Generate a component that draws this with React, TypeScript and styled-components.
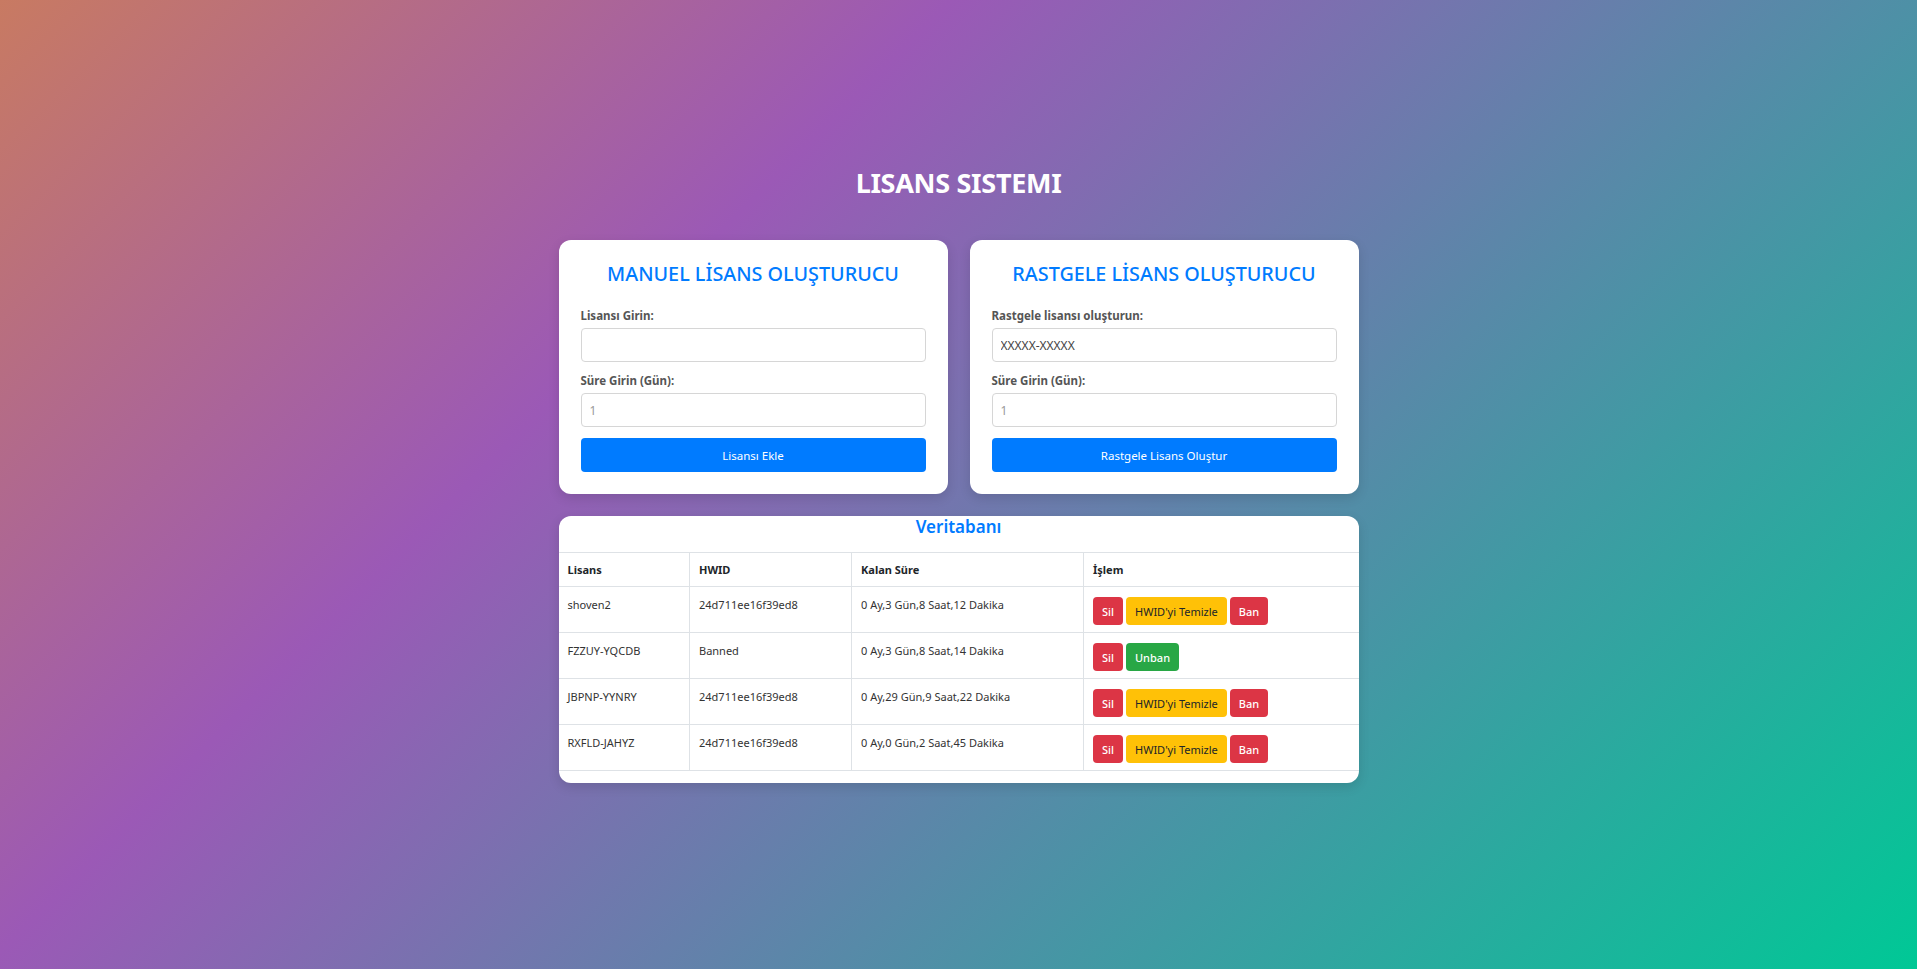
import React from "react";
import styled, { createGlobalStyle } from "styled-components";

const GlobalStyle = createGlobalStyle`
  * { box-sizing: border-box; }
  html, body { margin: 0; padding: 0; }
  body {
    font-family: "Noto Sans", "Open Sans", Arial, sans-serif;
    color: #212529;
  }
`;

const Page = styled.div`
  min-height: 100vh;
  background: linear-gradient(135deg, #c87a62 0%, #9b59b6 33%, #00c896 100%);
  display: flex;
  flex-direction: column;
  align-items: center;
  padding-top: 166px;
`;

const Title = styled.h1`
  margin: 0 0 40px;
  font-size: 27px;
  line-height: 34px;
  font-weight: 700;
  color: #ffffff;
  letter-spacing: -0.3px;
`;

const Container = styled.div`
  width: 800px;
  display: flex;
  flex-direction: column;
  gap: 22px;
`;

const CardRow = styled.div`
  display: grid;
  grid-template-columns: 1fr 1fr;
  gap: 22px;
`;

const Card = styled.div`
  background: #ffffff;
  border-radius: 12px;
  padding: 21px 22px 22px;
  box-shadow: 0 4px 12px rgba(0, 0, 0, 0.12);
`;

const CardTitle = styled.h2`
  margin: 0 0 21px;
  font-size: 19.8px;
  line-height: 26px;
  font-weight: 500;
  color: #007bff;
  text-align: center;
`;

const Label = styled.label`
  display: block;
  margin-bottom: 4px;
  font-size: 11.5px;
  line-height: 16px;
  font-weight: 700;
  color: #555555;
`;

const Input = styled.input`
  display: block;
  width: 100%;
  height: 34px;
  margin-bottom: 11px;
  padding: 0 8px;
  border: 1px solid #d6d6d6;
  border-radius: 4px;
  font-family: inherit;
  font-size: 12px;
  color: #444444;
  background: #ffffff;
  &::placeholder { color: #9a9a9a; }
`;

const SubmitButton = styled.button`
  display: block;
  width: 100%;
  height: 34px;
  border: none;
  border-radius: 4px;
  background: #007bff;
  color: #ffffff;
  font-family: inherit;
  font-size: 11.5px;
  cursor: pointer;
`;

const TableCard = styled.div`
  background: #ffffff;
  border-radius: 12px;
  padding: 0 0 12px;
  overflow: hidden;
  box-shadow: 0 4px 12px rgba(0, 0, 0, 0.12);
`;

const TableTitle = styled.h3`
  margin: 0 0 14px;
  font-size: 17px;
  line-height: 22px;
  font-weight: 600;
  color: #007bff;
  text-align: center;
`;

const Table = styled.table`
  width: 100%;
  border-collapse: collapse;
  table-layout: fixed;
  font-size: 11px;
`;

const Th = styled.th<{ $w: number }>`
  width: ${(p) => p.$w}px;
  text-align: left;
  font-weight: 700;
  color: #212529;
  padding: 8px 9px;
  line-height: 17px;
  border: 1px solid #dee2e6;
  &:first-child { border-left: none; }
  &:last-child { border-right: none; }
`;

const Td = styled.td`
  vertical-align: top;
  padding: 9px 9px 7px;
  line-height: 17px;
  color: #333333;
  border: 1px solid #dee2e6;
  &:first-child { border-left: none; }
  &:last-child { border-right: none; }
`;

const Actions = styled.div`
  display: flex;
  gap: 3px;
  margin-top: 1px;
`;

const variants = {
  danger: { bg: "#dc3545", fg: "#ffffff" },
  warning: { bg: "#ffc107", fg: "#212529" },
  success: { bg: "#28a745", fg: "#ffffff" },
};

const ActionButton = styled.button<{ $variant: keyof typeof variants }>`
  height: 28px;
  padding: 0 9px;
  border: none;
  border-radius: 4px;
  font-family: inherit;
  font-size: 11px;
  font-weight: ${(p) => (p.$variant === "warning" ? 400 : 500)};
  background: ${(p) => variants[p.$variant].bg};
  color: ${(p) => variants[p.$variant].fg};
  cursor: pointer;
`;

type Row = { lisans: string; hwid: string; sure: string; banned: boolean };

const rows: Row[] = [
  { lisans: "shoven2", hwid: "24d711ee16f39ed8", sure: "0 Ay,3 Gün,8 Saat,12 Dakika", banned: false },
  { lisans: "FZZUY-YQCDB", hwid: "Banned", sure: "0 Ay,3 Gün,8 Saat,14 Dakika", banned: true },
  { lisans: "JBPNP-YYNRY", hwid: "24d711ee16f39ed8", sure: "0 Ay,29 Gün,9 Saat,22 Dakika", banned: false },
  { lisans: "RXFLD-JAHYZ", hwid: "24d711ee16f39ed8", sure: "0 Ay,0 Gün,2 Saat,45 Dakika", banned: false },
];

export default function App() {
  return (
    <>
      <GlobalStyle />
      <Page>
        <Title>LISANS SISTEMI</Title>
        <Container>
          <CardRow>
            <Card>
              <CardTitle>MANUEL LİSANS OLUŞTURUCU</CardTitle>
              <Label>Lisansı Girin:</Label>
              <Input type="text" />
              <Label>Süre Girin (Gün):</Label>
              <Input type="number" placeholder="1" />
              <SubmitButton>Lisansı Ekle</SubmitButton>
            </Card>
            <Card>
              <CardTitle>RASTGELE LİSANS OLUŞTURUCU</CardTitle>
              <Label>Rastgele lisansı oluşturun:</Label>
              <Input type="text" defaultValue="XXXXX-XXXXX" readOnly />
              <Label>Süre Girin (Gün):</Label>
              <Input type="number" placeholder="1" />
              <SubmitButton>Rastgele Lisans Oluştur</SubmitButton>
            </Card>
          </CardRow>
          <TableCard>
            <TableTitle>Veritabanı</TableTitle>
            <Table>
              <thead>
                <tr>
                  <Th $w={131}>Lisans</Th>
                  <Th $w={162}>HWID</Th>
                  <Th $w={232}>Kalan Süre</Th>
                  <Th $w={275}>İşlem</Th>
                </tr>
              </thead>
              <tbody>
                {rows.map((r) => (
                  <tr key={r.lisans}>
                    <Td>{r.lisans}</Td>
                    <Td>{r.hwid}</Td>
                    <Td>{r.sure}</Td>
                    <Td>
                      <Actions>
                        <ActionButton $variant="danger">Sil</ActionButton>
                        {r.banned ? (
                          <ActionButton $variant="success">Unban</ActionButton>
                        ) : (
                          <>
                            <ActionButton $variant="warning">HWID'yi Temizle</ActionButton>
                            <ActionButton $variant="danger">Ban</ActionButton>
                          </>
                        )}
                      </Actions>
                    </Td>
                  </tr>
                ))}
              </tbody>
            </Table>
          </TableCard>
        </Container>
      </Page>
    </>
  );
}
